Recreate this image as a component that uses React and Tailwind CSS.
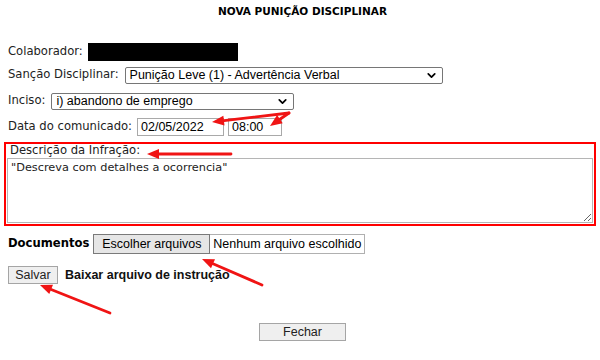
import { ChevronDown } from "lucide-react";

// red annotation arrows: [tailX, tailY, tipX, tipY]
const arrows = [
  [289, 113, 212, 122],
  [289, 113, 270, 126],
  [231, 154, 147, 154],
  [262, 285, 202, 259],
  [110, 313, 40, 285],
];

function Arrow({ a }) {
  const [x1, y1, x2, y2] = a;
  const dx = x2 - x1;
  const dy = y2 - y1;
  const len = Math.hypot(dx, dy);
  const ux = dx / len;
  const uy = dy / len;
  const hl = 12;
  const hw = 5;
  const bx = x2 - ux * hl;
  const by = y2 - uy * hl;
  const pts = `${x2},${y2} ${bx - uy * hw},${by + ux * hw} ${bx + uy * hw},${by - ux * hw}`;
  return (
    <g>
      <line x1={x1} y1={y1} x2={bx} y2={by} stroke="#f01414" strokeWidth="2.8" strokeLinecap="round" />
      <polygon points={pts} fill="#f01414" />
    </g>
  );
}

function FakeSelect({ value, width }) {
  return (
    <div
      className={`${width} h-[17px] flex items-center justify-between border border-[#767676] rounded-[2px] bg-white pl-[4px] pr-[4px] font-['Liberation_Sans'] text-[12.5px] text-black`}
    >
      <span className="leading-none">{value}</span>
      <ChevronDown size={13} strokeWidth={3.2} className="text-black" />
    </div>
  );
}

export default function App() {
  return (
    <div className="relative w-[600px] h-[360px] overflow-hidden bg-white px-[8px] font-['DejaVu_Sans',sans-serif] text-[11.6px] text-[#222]">

      <div className="h-[24px] flex items-center justify-center pl-[5px] text-[10.5px] font-bold text-black">
        NOVA PUNIÇÃO DISCIPLINAR
      </div>

      <div className="mt-[19px] h-[18px] flex items-center">
        <span>Colaborador:</span>
        <div className="ml-[5px] w-[150px] h-[18px] bg-black" />
      </div>

      <div className="mt-[5px] h-[18px] flex items-center">
        <span>Sanção Disciplinar:</span>
        <div className="ml-[6px]">
          <FakeSelect value="Punição Leve (1) - Advertência Verbal" width="w-[318px]" />
        </div>
      </div>

      <div className="mt-[8px] h-[18px] flex items-center">
        <span>Inciso:</span>
        <div className="ml-[6px]">
          <FakeSelect value="i) abandono de emprego" width="w-[243px]" />
        </div>
      </div>

      <div className="mt-[8px] h-[18px] flex items-center">
        <span>Data do comunicado:</span>
        <div className="ml-[5px] w-[87px] h-[18px] flex items-center border border-[#a9a9a9] pl-[3px] font-['Liberation_Sans'] text-[12.5px] text-black">
          02/05/2022
        </div>
        <div className="ml-[4px] w-[54px] h-[18px] flex items-center border border-[#a9a9a9] pl-[3px] font-['Liberation_Sans'] text-[12.5px] text-black">
          08:00
        </div>
      </div>

      <div className="mt-[6px] mx-[-4px] h-[84px] border-2 border-[#ff0000] px-[1px] flex flex-col">
        <div className="h-[14px] flex items-center pl-[3px]">Descrição da Infração:</div>
        <textarea
          defaultValue={'"Descreva com detalhes a ocorrencia"'}
          className="w-[586px] h-[65px] border border-[#b5b5b5] px-[3px] py-[1px] text-[11.3px] leading-[15px] text-[#222] font-['DejaVu_Sans',sans-serif] outline-none"
        />
      </div>

      <div className="mt-[8px] h-[20px] flex items-center">
        <span className="font-bold text-black">Documentos</span>
        <div className="ml-[4px] h-[20px] flex">
          <div className="w-[117px] h-[20px] flex items-center justify-center bg-[#e6e6e6] border border-[#7a7a7a] font-['Liberation_Sans'] text-[12.5px] text-black">
            Escolher arquivos
          </div>
          <div className="w-[155px] h-[20px] flex items-center pl-[3px] bg-white border border-l-0 border-[#b0b0b0] font-['Liberation_Sans'] text-[12.5px] text-black">
            Nenhum arquivo escolhido
          </div>
        </div>
      </div>

      <div className="mt-[12px] h-[18px] flex items-center">
        <div className="w-[50px] h-[18px] flex items-center justify-center bg-[#efefef] border border-[#a5a5a5] font-['Liberation_Sans'] text-[12.5px] text-[#222]">
          Salvar
        </div>
        <span className="ml-[7px] font-['Liberation_Sans'] font-bold text-[12.5px] text-[#111]">
          Baixar arquivo de instrução
        </span>
      </div>

      <div className="mt-[39px] h-[18px] flex justify-center pl-[5px]">
        <div className="w-[87px] h-[18px] flex items-center justify-center bg-[#efefef] border border-[#a5a5a5] font-['Liberation_Sans'] text-[12.5px] text-[#222]">
          Fechar
        </div>
      </div>

      <svg className="absolute left-0 top-0 pointer-events-none" width="600" height="360">
        {arrows.map((a, i) => (
          <Arrow key={i} a={a} />
        ))}
      </svg>
    </div>
  );
}
